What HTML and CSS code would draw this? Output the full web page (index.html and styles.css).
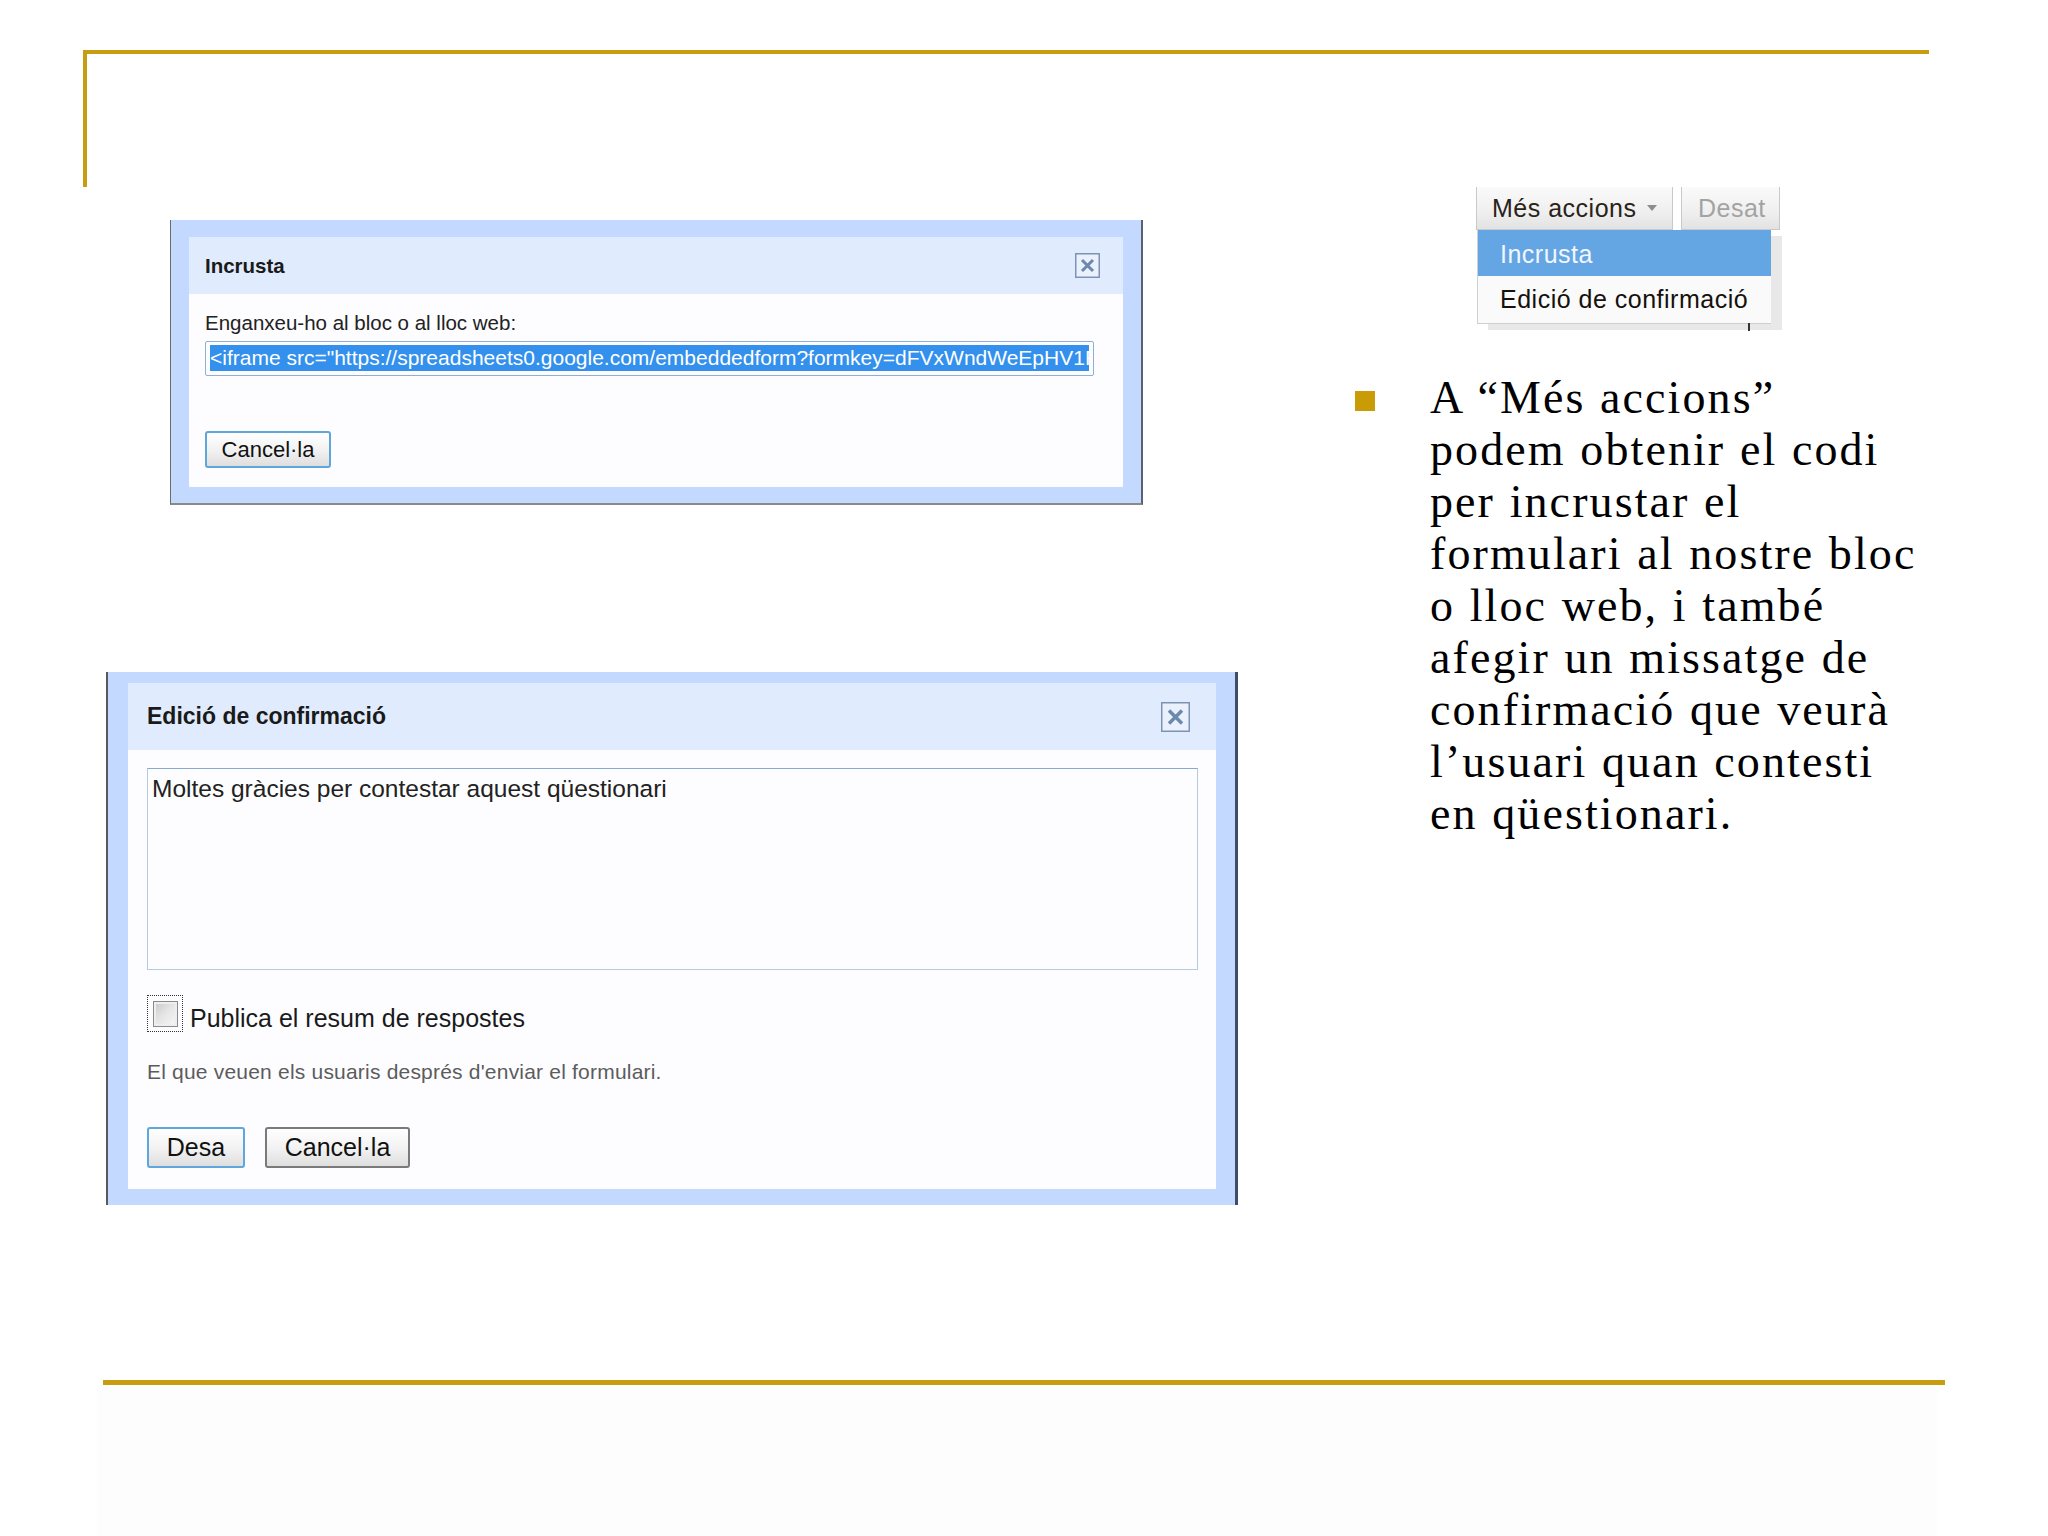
FILE: index.html
```html
<!DOCTYPE html>
<html lang="ca">
<head>
<meta charset="utf-8">
<title>Incrusta formulari</title>
<link rel="stylesheet" href="styles.css">
</head>
<body>
<div class="slide">
  <div class="top-frame"></div>
  <div class="content">
    <div class="left-col">
      <div class="dialog dialog-embed">
        <div class="dialog-inner">
          <div class="titlebar">
            <span class="title">Incrusta</span>
            <svg class="close" viewBox="0 0 25 25" width="25" height="25"><rect x="0.75" y="0.75" width="23.5" height="23.5" fill="#eaf1fc" stroke="#7d93b4" stroke-width="1.5"/><path d="M7 7 L18 18 M18 7 L7 18" stroke="#6b88ad" stroke-width="3"/></svg>
          </div>
          <div class="body">
            <div class="label">Enganxeu-ho al bloc o al lloc web:</div>
            <div class="embed-input"><div class="sel">&lt;iframe src="https://spreadsheets0.google.com/embeddedform?formkey=dFVxWndWeEpHV1RkZXc6MQ" width="760" height="1005" frameborder="0"&gt;</div></div>
            <button class="btn btn-focus btn-small">Cancel·la</button>
          </div>
        </div>
      </div>

      <div class="dialog dialog-confirm">
        <div class="dialog-inner">
          <div class="titlebar">
            <span class="title">Edició de confirmació</span>
            <svg class="close" viewBox="0 0 29 30" width="29" height="30"><rect x="0.75" y="0.75" width="27.5" height="28.5" fill="#eaf1fc" stroke="#7d93b4" stroke-width="1.5"/><path d="M8 8.5 L21 21.5 M21 8.5 L8 21.5" stroke="#6b88ad" stroke-width="3.5"/></svg>
          </div>
          <div class="body">
            <div class="textarea">Moltes gràcies per contestar aquest qüestionari</div>
            <div class="check-row">
              <span class="cb-focus"><span class="cb"></span></span>
              <span class="check-label">Publica el resum de respostes</span>
            </div>
            <div class="helper">El que veuen els usuaris després d'enviar el formulari.</div>
            <div class="btn-row">
              <button class="btn btn-focus btn-desa">Desa</button>
              <button class="btn btn-plain btn-cancel">Cancel·la</button>
            </div>
          </div>
        </div>
      </div>
    </div>

    <div class="right-col">
      <div class="menu-wrap">
        <div class="menu-buttons">
          <div class="mbtn mbtn-more">Més accions<span class="caret"></span></div>
          <div class="mbtn mbtn-saved">Desat</div>
        </div>
        <div class="menu">
          <div class="menu-item active">Incrusta</div>
          <div class="menu-item">Edició de confirmació</div>
          <span class="tick"></span>
        </div>
      </div>

      <div class="bullet-item">
        <span class="bullet"></span>
        <p class="bullet-text">A “Més accions”<br>podem obtenir el codi<br>per incrustar el<br>formulari al nostre bloc<br>o lloc web, i també<br>afegir un missatge de<br>confirmació que veurà<br>l’usuari quan contesti<br>en qüestionari.</p>
      </div>
    </div>
  </div>
  <div class="bottom-rule"></div>
  <div class="footer"></div>
</div>
</body>
</html>
```

FILE: styles.css
```css
html, body {
  margin: 0;
  padding: 0;
  background: #ffffff;
}

body {
  font-family: "Liberation Sans", Arial, sans-serif;
  color: #222;
}

.slide {
  width: 2048px;
  height: 1536px;
  overflow: hidden;
  background: #ffffff;
}

.top-frame {
  margin: 50px 0 0 83px;
  width: 1842px;
  height: 133px;
  border-top: 4px solid #c99d12;
  border-left: 4px solid #c99d12;
}

.content {
  display: grid;
  grid-template-columns: 1300px 1fr;
  height: 1193px;
}

.left-col {
  display: flex;
  flex-direction: column;
  align-items: flex-start;
}

/* ---------- dialogs ---------- */
.dialog {
  box-sizing: border-box;
  background: #c3d9ff;
}

.dialog-inner {
  background: #fdfdff;
  display: flex;
  flex-direction: column;
}

.titlebar {
  display: flex;
  align-items: center;
  justify-content: space-between;
  background: #e0ecfd;
}

.title {
  font-weight: bold;
  color: #1a1a1a;
}

.close {
  display: block;
  flex: none;
}

.body {
  display: flex;
  flex-direction: column;
  align-items: flex-start;
}

.dialog-embed {
  margin: 33px 0 0 170px;
  width: 973px;
  border-left: 1px solid #6b6b6b;
  border-right: 2px solid #5a6170;
  border-bottom: 2px solid #8a8a8a;
  padding: 17px 18px 16px 18px;
}

.dialog-embed .titlebar {
  height: 57px;
  padding: 0 23px 0 16px;
}

.dialog-embed .title {
  font-size: 20.5px;
}

.dialog-embed .body {
  padding: 17px 29px 19px 16px;
}

.label {
  font-size: 20.5px;
  line-height: 24px;
  color: #222;
}

.embed-input {
  align-self: stretch;
  margin-top: 6px;
  height: 35px;
  box-sizing: border-box;
  border: 1px solid #8fb0d4;
  border-radius: 2px;
  padding: 3px 4px 4px 4px;
}

.sel {
  background: #3390ec;
  color: #ffffff;
  font-size: 21px;
  line-height: 26px;
  height: 26px;
  white-space: nowrap;
  overflow: hidden;
}

.btn {
  box-sizing: border-box;
  font-family: "Liberation Sans", Arial, sans-serif;
  color: #111;
  background: linear-gradient(#ffffff 0%, #f1f1f1 55%, #dedede 100%);
  border-radius: 3px;
  padding: 0;
  margin: 0;
}

.btn-focus {
  border: 2px solid #5fa6dc;
}

.btn-plain {
  border: 2px solid #7a7a7a;
}

.btn-small {
  margin-top: 55px;
  width: 126px;
  height: 37px;
  font-size: 22px;
}

.dialog-confirm {
  margin: 167px 0 0 106px;
  width: 1132px;
  border-left: 2px solid #5a5a5a;
  border-right: 3px solid #3d4e6a;
  padding: 11px 19px 16px 20px;
}

.dialog-confirm .titlebar {
  height: 67px;
  padding: 0 26px 0 19px;
}

.dialog-confirm .title {
  font-size: 23px;
}

.dialog-confirm .body {
  padding: 18px 18px 21px 19px;
}

.textarea {
  align-self: stretch;
  box-sizing: border-box;
  height: 202px;
  border: 1px solid #b3cbe4;
  border-top-color: #86a9d0;
  padding: 5px 4px;
  font-size: 24.5px;
  line-height: 30px;
  color: #222;
}

.check-row {
  margin-top: 25px;
  height: 37px;
  display: flex;
  align-items: center;
}

.cb-focus {
  box-sizing: border-box;
  width: 36px;
  height: 37px;
  border: 1.5px dotted #333;
  display: flex;
  align-items: center;
  justify-content: center;
}

.cb {
  box-sizing: border-box;
  width: 25px;
  height: 26px;
  border: 1px solid #8a8a8a;
  background: linear-gradient(135deg, #c8c8c8 0%, #e6e6e6 50%, #f7f7f7 100%);
  box-shadow: inset 0 0 0 2px #eeeeee;
}

.check-label {
  margin-left: 7px;
  padding-top: 9px;
  font-size: 25px;
  color: #1a1a1a;
}

.helper {
  margin-top: 27px;
  font-size: 21px;
  line-height: 26px;
  letter-spacing: 0.2px;
  color: #5c5c5c;
}

.btn-row {
  margin-top: 42px;
  display: flex;
  gap: 20px;
}

.btn-desa,
.btn-cancel {
  height: 41px;
  font-size: 25px;
}

.btn-desa {
  width: 98px;
}

.btn-cancel {
  width: 145px;
}

/* ---------- menu ---------- */
.right-col {
  display: flex;
  flex-direction: column;
  align-items: flex-start;
}

.menu-wrap {
  margin-left: 176px;
}

.menu-buttons {
  display: flex;
  gap: 8px;
  height: 43px;
}

.mbtn {
  box-sizing: border-box;
  height: 43px;
  display: flex;
  align-items: center;
  background: linear-gradient(#fafafa 0%, #efefef 60%, #e2e2e2 100%);
  border: 1px solid #c9c9c9;
  border-top: none;
  font-size: 25px;
  letter-spacing: 0.5px;
}

.mbtn-more {
  width: 197px;
  padding-left: 15px;
  color: #2a2218;
}

.mbtn-saved {
  width: 99px;
  padding-left: 16px;
  color: #a3a3a3;
}

.caret {
  margin-left: 11px;
  width: 0;
  height: 0;
  border-left: 5px solid transparent;
  border-right: 5px solid transparent;
  border-top: 6px solid #8c8c8c;
}

.menu {
  position: relative;
  width: 294px;
  margin-left: 1px;
  box-sizing: border-box;
  border-left: 1px solid #d0d0d0;
  border-bottom: 1px solid #cfcfcf;
  box-shadow: 11px 6px 0 #e8e8e8;
  background: #fafafa;
}

.menu-item {
  height: 47px;
  display: flex;
  align-items: center;
  padding-left: 22px;
  font-size: 25px;
  letter-spacing: 0.5px;
  color: #15110c;
}

.menu-item.active {
  height: 46px;
  padding-top: 3px;
  box-sizing: border-box;
  background: #64a5e4;
  color: #f2f6ff;
}

.tick {
  position: absolute;
  left: 270px;
  bottom: -8px;
  width: 2px;
  height: 8px;
  background: #333;
}

/* ---------- bullet ---------- */
.bullet-item {
  margin: 48px 0 0 55px;
  display: flex;
  align-items: flex-start;
}

.bullet {
  flex: none;
  width: 20px;
  height: 20px;
  margin-top: 19px;
  background: #c99b06;
}

.bullet-text {
  margin: 0 0 0 55px;
  font-family: "Liberation Serif", "Times New Roman", serif;
  font-size: 46px;
  line-height: 52px;
  letter-spacing: 2.1px;
  word-spacing: 1px;
  white-space: nowrap;
  color: #000;
}

/* ---------- footer ---------- */
.bottom-rule {
  margin-left: 103px;
  width: 1842px;
  height: 5px;
  background: #c99d12;
}

.footer {
  margin: 2px 0 0 97px;
  width: 1840px;
  height: 149px;
  background: #fdfdfd;
}
```
